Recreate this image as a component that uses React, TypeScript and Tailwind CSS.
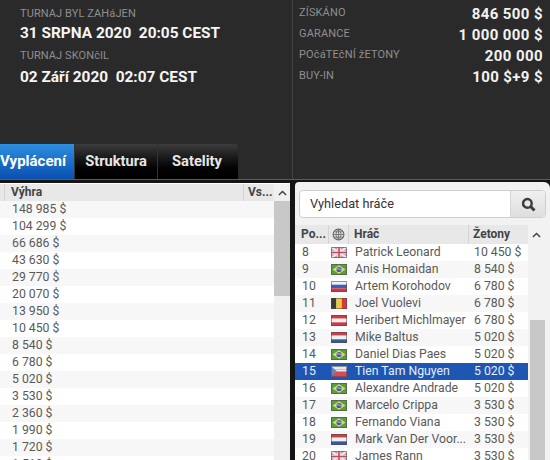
const font = { fontFamily: 'Roboto, "Liberation Sans", sans-serif' };

function Flag({ c }: { c: string }) {
  const box = "w-4 h-[11px] shrink-0 block";
  const edge = <rect x="0.5" y="0.5" width="15" height="10" fill="none" stroke="#4a4a4a" strokeOpacity="0.55" />;
  if (c === "gb")
    return (
      <svg viewBox="0 0 16 11" className={box}>
        <rect width="16" height="11" fill="#a9a2bb" />
        <path d="M0 0L16 11M16 0L0 11" stroke="#f1e6e8" strokeWidth="2.2" />
        <path d="M8 0V11M0 5.5H16" stroke="#f1e6e8" strokeWidth="3.4" />
        <path d="M8 0V11M0 5.5H16" stroke="#c8495a" strokeWidth="1.6" />
        {edge}
      </svg>
    );
  if (c === "br")
    return (
      <svg viewBox="0 0 16 11" className={box}>
        <rect width="16" height="11" fill="#5a9c42" />
        <path d="M8 1.2L14.5 5.5L8 9.8L1.5 5.5Z" fill="#dcd873" />
        <circle cx="8" cy="5.5" r="2.6" fill="#3f5f9c" />
        <path d="M5.6 5C7 4.6 9 5 10.4 6" stroke="#e8eef0" strokeWidth="0.7" fill="none" />
        {edge}
      </svg>
    );
  if (c === "be")
    return (
      <svg viewBox="0 0 16 11" className={box}>
        <rect width="5.4" height="11" fill="#3a3a36" />
        <rect x="5.4" width="5.3" height="11" fill="#eecb35" />
        <rect x="10.7" width="5.3" height="11" fill="#d8393a" />
        {edge}
      </svg>
    );
  const bands: Record<string, string[]> = {
    ru: ["#eef0f6", "#3d5fb5", "#cf3640"],
    at: ["#cf3a45", "#f2f0f0", "#cf3a45"],
    nl: ["#c9404a", "#f0f0f2", "#3a5a96"],
    cz: ["#e8e8f0", "#e8e8f0", "#d84a55"],
  };
  return (
    <svg viewBox="0 0 16 11" className={box}>
      {bands[c].map((f, i) => (
        <rect key={i} y={(i * 11) / 3} width="16" height={11 / 3} fill={f} />
      ))}
      {c === "cz" && <rect y="5.5" width="16" height="5.5" fill="#d84a55" />}
      {c === "cz" && <path d="M0 0L6 5.5L0 11Z" fill="#6f80b8" />}
      {edge}
    </svg>
  );
}

const payouts = ["148 985 $","104 299 $","66 686 $","43 630 $","29 770 $","20 070 $","13 950 $","10 450 $","8 540 $","6 780 $","5 020 $","3 530 $","2 360 $","1 990 $","1 720 $","1 510 $"];

const players: [number, string, string, string][] = [
  [8, "gb", "Patrick Leonard", "10 450 $"],
  [9, "br", "Anis Homaidan", "8 540 $"],
  [10, "ru", "Artem Korohodov", "6 780 $"],
  [11, "be", "Joel Vuolevi", "6 780 $"],
  [12, "at", "Heribert Michlmayer", "6 780 $"],
  [13, "nl", "Mike Baltus", "5 020 $"],
  [14, "br", "Daniel Dias Paes", "5 020 $"],
  [15, "cz", "Tien Tam Nguyen", "5 020 $"],
  [16, "br", "Alexandre Andrade", "5 020 $"],
  [17, "br", "Marcelo Crippa", "3 530 $"],
  [18, "br", "Fernando Viana", "3 530 $"],
  [19, "nl", "Mark Van Der Voor...", "3 530 $"],
  [20, "gb", "James Rann", "3 530 $"],
];

function Chevron() {
  return (
    <svg viewBox="0 0 10 6" className="w-[9px] h-[6px]">
      <path d="M1 5.2L5 1.4L9 5.2" stroke="#444" strokeWidth="1.7" fill="none" />
    </svg>
  );
}

function Stat({ label, value }: { label: string; value: string }) {
  return (
    <div className="flex justify-between items-center h-[21px]">
      <span className="text-[11px] leading-[14px] mb-[4px] text-[#8f8f8f] tracking-[0.15px]">{label}</span>
      <span className="text-[15px] font-bold text-[#f2f2f2] tracking-[0.4px]">{value}</span>
    </div>
  );
}

export default function App() {
  return (
    <div style={font} className="w-[550px] h-[460px] overflow-hidden bg-[#151515] flex flex-col">
      <div className="h-[179px] shrink-0 bg-[#2a2a2a] relative flex">
        <div className="w-[292px] shrink-0 pl-5 pt-[6px]">
          <div className="text-[11px] leading-[16px] text-[#8f8f8f] tracking-[0.1px]">TURNAJ BYL ZAHáJEN</div>
          <div className="text-[15.4px] leading-[20px] mt-[1px] font-bold text-[#f5f5f5] whitespace-pre">31 SRPNA 2020  20:05 CEST</div>
          <div className="text-[11px] leading-[16px] mt-[5px] text-[#8f8f8f] tracking-[0.1px]">TURNAJ SKONčIL</div>
          <div className="text-[15.4px] leading-[20px] mt-[3px] font-bold text-[#f5f5f5] whitespace-pre">02 Září 2020  02:07 CEST</div>
        </div>
        <div className="w-px bg-[#444444]" />
        <div className="flex-1 pl-[6px] pr-[7px] pt-[4px]">
          <Stat label="ZÍSKÁNO" value="846 500 $" />
          <Stat label="GARANCE" value="1 000 000 $" />
          <Stat label="POčáTEčNÍ žETONY" value="200 000" />
          <Stat label="BUY-IN" value="100 $+9 $" />
        </div>
        <div className="absolute left-0 bottom-0 flex h-[35px] text-[14.7px] font-bold text-[#e6e6e6]">
          <div className="w-[74px] pr-[8px] text-[15px] flex items-center justify-end overflow-hidden bg-gradient-to-b from-[#2f8fe0] to-[#0a4fb0] text-white">Vyplácení</div>
          <div className="w-[83px] flex items-center justify-center bg-gradient-to-b from-[#3c3c3c] via-[#111111] to-[#000000] border-l border-[#333]">Struktura</div>
          <div className="w-[81px] pr-[2px] flex items-center justify-center bg-gradient-to-b from-[#3c3c3c] via-[#111111] to-[#000000] border-l border-[#333] rounded-tr-[3px]">Satelity</div>
        </div>
      </div>
      <div className="h-px shrink-0 bg-[#2a66a8]" />
      <div className="flex-1 flex pt-[2px] min-h-0">
        <div className="w-[290px] shrink-0 mt-px bg-white flex flex-col min-h-0 overflow-hidden">
          <div className="flex h-[17px] mt-px shrink-0">
            <div className="flex-1 flex bg-[#e8e8e8] text-[12px] font-bold text-[#444] leading-[17px]">
              <div className="w-[5px] border-r border-[#d4d4d4]" />
              <div className="flex-1 pl-[6px]">Výhra</div>
              <div className="w-[31px] pl-[4px] border-l border-[#d4d4d4]">Vs...</div>
            </div>
            <div className="w-[16px] bg-[#f0f0f0] flex items-center justify-center"><Chevron /></div>
          </div>
          <div className="flex-1 flex min-h-0">
            <div className="flex-1 min-w-0">
              {payouts.map((p, i) => (
                <div key={p} className={`h-[17px] pl-[12px] text-[12.25px] leading-[17px] text-[#5a5a5a] ${i % 2 ? "bg-white" : "bg-[#f7f7f7]"}`}>{p}</div>
              ))}
            </div>
            <div className="w-[16px] bg-[#f0f0f0] flex flex-col">
              <div className="h-[95px] bg-[#c8c8c8]" />
            </div>
          </div>
        </div>
        <div className="w-[5px] shrink-0 bg-[#151515]" />
        <div className="flex-1 bg-[#f2f2f2] rounded-tl-[4px] rounded-tr-[6px] flex flex-col min-h-0 overflow-hidden">
          <div className="mx-[4px] mt-[8px] h-[28px] shrink-0 flex border border-[#cfcfcf] rounded-[4px] bg-white overflow-hidden">
            <div className="flex-1 pl-[10px] text-[12.75px] leading-[26px] text-[#333]">Vyhledat hráče</div>
            <div className="w-[35px] bg-gradient-to-b from-[#f0f0f0] to-[#dedede] border-l border-[#d6d6d6] flex items-center justify-center">
              <svg viewBox="0 0 16 16" className="w-[15px] h-[15px]">
                <circle cx="6.8" cy="6.8" r="4.6" stroke="#3c3c3c" strokeWidth="2.6" fill="none" />
                <path d="M10.2 10.2L14.4 14.4" stroke="#3c3c3c" strokeWidth="3.2" />
              </svg>
            </div>
          </div>
          <div className="flex h-[19px] mt-[7px] shrink-0">
            <div className="w-[233px] flex bg-[#e8e8e8] text-[12px] font-bold text-[#444] leading-[19px]">
              <div className="w-[33px] pl-[6px]">Po...</div>
              <div className="w-[21px] border-x border-[#d4d4d4] flex items-center justify-center">
                <svg viewBox="0 0 12 12" className="w-[13px] h-[13px]">
                  <circle cx="6" cy="6" r="5" stroke="#666" fill="#ddd" strokeWidth="1" />
                  <path d="M1 6H11M6 1V11M2 3.5H10M2 8.5H10M6 1C3 3.5 3 8.5 6 11M6 1C9 3.5 9 8.5 6 11" stroke="#666" strokeWidth="0.7" fill="none" />
                </svg>
              </div>
              <div className="flex-1 pl-[5px]">Hráč</div>
              <div className="w-[60px] pl-[4px] border-l border-[#d4d4d4]">Žetony</div>
            </div>
            <div className="flex-1 flex items-center justify-center pr-[6px]"><Chevron /></div>
          </div>
          <div className="flex-1 flex min-h-0">
            <div className="w-[233px] shrink-0">
              {players.map(([n, c, name, chips], i) => {
                const sel = n === 15;
                return (
                  <div key={n} className={`flex items-center h-[17px] text-[12.25px] ${sel ? "bg-[#1e56b4] text-[#e8eef8]" : i % 2 ? "bg-[#f7f7f7] text-[#5a5a5a]" : "bg-white text-[#5a5a5a]"}`}>
                    <div className="w-[36px] pl-[7px] shrink-0">{n}</div>
                    <div className="w-[24px] shrink-0"><Flag c={c} /></div>
                    <div className="w-[118px] shrink-0 whitespace-nowrap overflow-hidden">{name}</div>
                    <div className="flex-1 pl-[1px]">{chips}</div>
                  </div>
                );
              })}
            </div>
            <div className="flex-1">
              <div className="w-full h-full flex flex-col">
                <div className="h-[76px] shrink-0" />
                <div className="w-[15px] ml-[2px] flex-1 bg-[#c8c8c8]" />
              </div>
            </div>
          </div>
        </div>
      </div>
    </div>
  );
}
